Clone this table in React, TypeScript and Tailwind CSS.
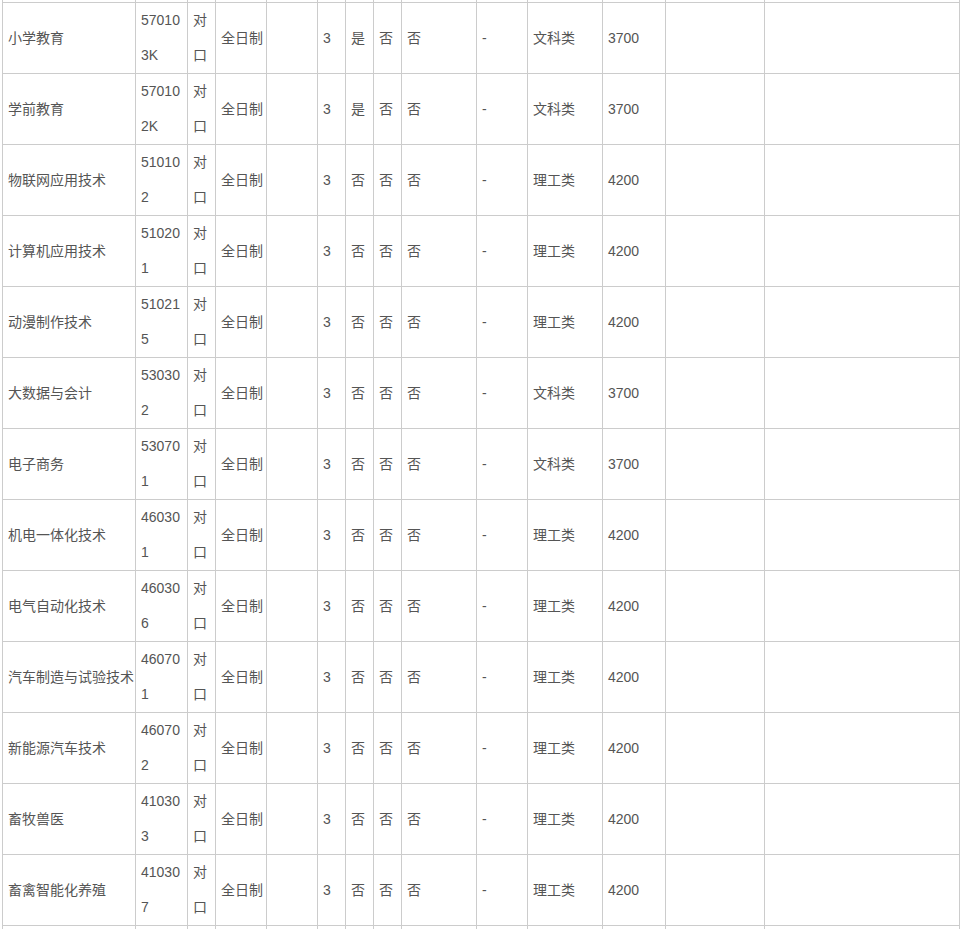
const rows: [string, string, string, string, string][] = [
  ["小学教育", "570103K", "是", "文科类", "3700"],
  ["学前教育", "570102K", "是", "文科类", "3700"],
  ["物联网应用技术", "510102", "否", "理工类", "4200"],
  ["计算机应用技术", "510201", "否", "理工类", "4200"],
  ["动漫制作技术", "510215", "否", "理工类", "4200"],
  ["大数据与会计", "530302", "否", "文科类", "3700"],
  ["电子商务", "530701", "否", "文科类", "3700"],
  ["机电一体化技术", "460301", "否", "理工类", "4200"],
  ["电气自动化技术", "460306", "否", "理工类", "4200"],
  ["汽车制造与试验技术", "460701", "否", "理工类", "4200"],
  ["新能源汽车技术", "460702", "否", "理工类", "4200"],
  ["畜牧兽医", "410303", "否", "理工类", "4200"],
  ["畜禽智能化养殖", "410307", "否", "理工类", "4200"],
];

const widths = [133, 52, 28, 51, 51, 28, 28, 28, 75, 51, 75, 63, 99, 195];

const td = "border border-[#cccccc] pl-[5px] pr-0 py-0 align-middle break-all";

export default function App() {
  return (
    <div className="min-h-screen bg-white overflow-hidden">
      <table
        className="ml-[2px] -mt-[69px] w-[958px] table-fixed border-collapse text-[14px] leading-[35px] text-[#555555]"
        style={{ fontFamily: '"Liberation Sans", Arial, "Noto Sans CJK SC", sans-serif' }}
      >
        <colgroup>
          {widths.map((w, i) => (
            <col key={i} style={{ width: w }} />
          ))}
        </colgroup>
        <tbody>
          <tr>
            {widths.map((_, i) => (
              <td key={i} className={td}>
                {i === 1 ? (
                  <>
                    &nbsp;
                    <br />
                    &nbsp;
                  </>
                ) : null}
              </td>
            ))}
          </tr>
          {rows.map(([name, code, flag, kind, fee]) => (
            <tr key={code}>
              <td className={`${td} whitespace-nowrap`}>{name}</td>
              <td className={td}>{code}</td>
              <td className={td}>对口</td>
              <td className={td}>全日制</td>
              <td className={td}></td>
              <td className={td}>3</td>
              <td className={td}>{flag}</td>
              <td className={td}>否</td>
              <td className={td}>否</td>
              <td className={td}>-</td>
              <td className={td}>{kind}</td>
              <td className={td}>{fee}</td>
              <td className={td}></td>
              <td className={td}></td>
            </tr>
          ))}
          <tr>
            <td className={`${td} whitespace-nowrap`}>&nbsp;</td>
            <td className={td}>
              &nbsp;
              <br />
              &nbsp;
            </td>
            {widths.slice(2).map((_, i) => (
              <td key={i} className={td}></td>
            ))}
          </tr>
        </tbody>
      </table>
    </div>
  );
}
